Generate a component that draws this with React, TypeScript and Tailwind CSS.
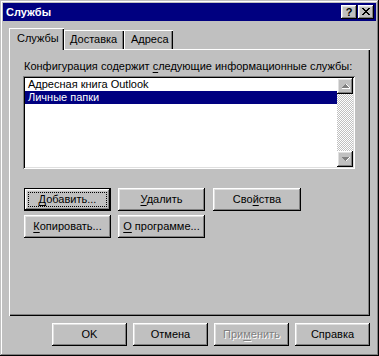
import React from "react";

const raised =
  "shadow-[inset_-1px_-1px_#000,inset_1px_1px_#fff,inset_-2px_-2px_#808080,inset_2px_2px_#dfdfdf]";

function Btn({
  children,
  w,
  def,
  disabled,
}: {
  children: React.ReactNode;
  w: string;
  def?: boolean;
  disabled?: boolean;
}) {
  if (def) {
    return (
      <div className={`${w} h-[23px] border border-black bg-[#c0c0c0] flex`}>
        <div className={`flex-1 ${raised} p-[3px] flex`}>
          <div className="flex-1 border border-dotted border-black flex items-center justify-center leading-[13px]">
            {children}
          </div>
        </div>
      </div>
    );
  }
  return (
    <div
      className={`${w} h-[23px] bg-[#c0c0c0] ${raised} flex items-center justify-center leading-[13px] ${
        disabled ? "text-[#808080] [text-shadow:1px_1px_#fff]" : "text-black"
      }`}
    >
      {children}
    </div>
  );
}

function U({ children }: { children: React.ReactNode }) {
  return <span className="underline underline-offset-[2px]">{children}</span>;
}

function Arrow({ up }: { up?: boolean }) {
  return (
    <div className={`w-[16px] h-[16px] bg-[#c0c0c0] ${raised} flex items-center justify-center`}>
      <svg width="16" height="16" viewBox="0 0 16 16" shapeRendering="crispEdges">
        {up ? (
          <>
            <path d="M5 10h8v1H5zM12 9h1v1h-1zM11 8h1v1h-1zM10 7h1v1h-1zM9 6h1v1H9z" fill="#fff" />
            <path d="M8 6h1v1H8zM7 7h3v1H7zM6 8h5v1H6zM5 9h7v1H5z" fill="#808080" />
          </>
        ) : (
          <>
            <path d="M5 6h7v1H5zM6 7h5v1H6zM7 8h3v1H7zM8 9h1v1H8z" fill="#808080" />
            <path d="M12 6h1v1h-1zM11 7h1v1h-1zM10 8h1v1h-1zM9 9h1v1H9z" fill="#fff" />
          </>
        )}
      </svg>
    </div>
  );
}

export default function App() {
  return (
    <div
      className="w-[379px] h-[356px] bg-[#c0c0c0] p-[3px] flex flex-col text-[11px] text-black shadow-[inset_-1px_-1px_#000,inset_1px_1px_#c0c0c0,inset_-2px_-2px_#808080,inset_2px_2px_#fff]"
      style={{ fontFamily: '"Liberation Sans", Arial, sans-serif' }}
    >
      {/* Title bar */}
      <div className="h-[18px] bg-[#000080] flex items-center pl-[3px] pr-[2px]">
        <span className="text-white font-bold text-[11px] leading-[13px] flex-1">Службы</span>
        <div className={`w-[16px] h-[14px] bg-[#c0c0c0] ${raised} flex items-center justify-center font-bold text-[11px] leading-none pt-[1px]`}>
          ?
        </div>
        <div className={`ml-[1px] w-[16px] h-[14px] bg-[#c0c0c0] ${raised} flex items-center justify-center`}>
          <svg width="16" height="14" viewBox="0 0 16 14" shapeRendering="crispEdges">
            <path
              d="M4 3h2v1H4zM10 3h2v1h-2zM5 4h2v1H5zM9 4h2v1H9zM6 5h4v1H6zM7 6h2v1H7zM6 7h4v1H6zM5 8h2v1H5zM9 8h2v1H9zM4 9h2v1H4zM10 9h2v1h-2z"
              fill="#000"
            />
          </svg>
        </div>
      </div>

      <div className="flex-1 flex flex-col px-[6px] pt-[7px]">
        {/* Tabs */}
        <div className="h-[21px] flex items-end">
          <div className="relative z-10 -mb-px h-[22px] w-[55px] bg-[#c0c0c0] shadow-[inset_1px_1px_#fff,inset_-1px_0_#000,inset_-2px_0_#808080] pl-[8px] pt-[4px] leading-[13px]">
            Службы
          </div>
          <div className="h-[19px] w-[60px] bg-[#c0c0c0] shadow-[inset_1px_1px_#fff,inset_-1px_0_#000,inset_-2px_0_#808080] pl-[6px] pt-[3px] leading-[13px]">
            Доставка
          </div>
          <div className="h-[19px] w-[49px] bg-[#c0c0c0] shadow-[inset_1px_1px_#fff,inset_-1px_0_#000,inset_-2px_0_#808080] pl-[7px] pt-[3px] leading-[13px]">
            Адреса
          </div>
        </div>

        {/* Panel */}
        <div className="h-[267px] bg-[#c0c0c0] shadow-[inset_1px_1px_#fff,inset_-1px_-1px_#000,inset_-2px_-2px_#808080] pl-[14px] pt-[11px] flex flex-col">
          <div className="leading-[13px] pl-[1px]">
            Конфигурация содержит <U>с</U>ледующие информационные службы:
          </div>
          <div className="mt-[3px] w-[332px] h-[93px] bg-white p-[2px] flex shadow-[inset_1px_1px_#808080,inset_-1px_-1px_#fff,inset_2px_2px_#000,inset_-2px_-2px_#dfdfdf]">
            <div className="flex-1 flex flex-col">
              <div className="h-[13px] leading-[13px] pl-[3px]">Адресная книга Outlook</div>
              <div className="h-[13px] leading-[13px] pl-[3px] bg-[#000080] text-white">Личные папки</div>
            </div>
            <div className="w-[16px] flex flex-col">
              <Arrow up />
              <div className="flex-1 bg-[repeating-conic-gradient(#fff_0%_25%,#c0c0c0_0%_50%)] bg-[length:2px_2px]" />
              <Arrow />
            </div>
          </div>

          <div className="mt-[19px] flex gap-[7px] pl-[1px]">
            <Btn w="w-[87px]" def>
              <span>
                <U>Д</U>обавить...
              </span>
            </Btn>
            <Btn w="w-[87px]">
              <span>
                <U>У</U>далить
              </span>
            </Btn>
            <div className="ml-[1px]">
              <Btn w="w-[88px]">
                <span>
                  Сво<U>й</U>ства
                </span>
              </Btn>
            </div>
          </div>
          <div className="mt-[4px] flex gap-[7px] pl-[1px]">
            <Btn w="w-[87px]">
              <span>
                <U>К</U>опировать...
              </span>
            </Btn>
            <Btn w="w-[87px]">
              <span>
                <U>О</U> программе...
              </span>
            </Btn>
          </div>
        </div>

        {/* Bottom buttons */}
        <div className="mt-[7px] flex justify-end gap-[6px]">
          <Btn w="w-[75px]">OK</Btn>
          <Btn w="w-[75px]">Отмена</Btn>
          <Btn w="w-[75px]" disabled>
            <span>
              При<U>м</U>енить
            </span>
          </Btn>
          <Btn w="w-[75px]">Справка</Btn>
        </div>
      </div>
    </div>
  );
}
